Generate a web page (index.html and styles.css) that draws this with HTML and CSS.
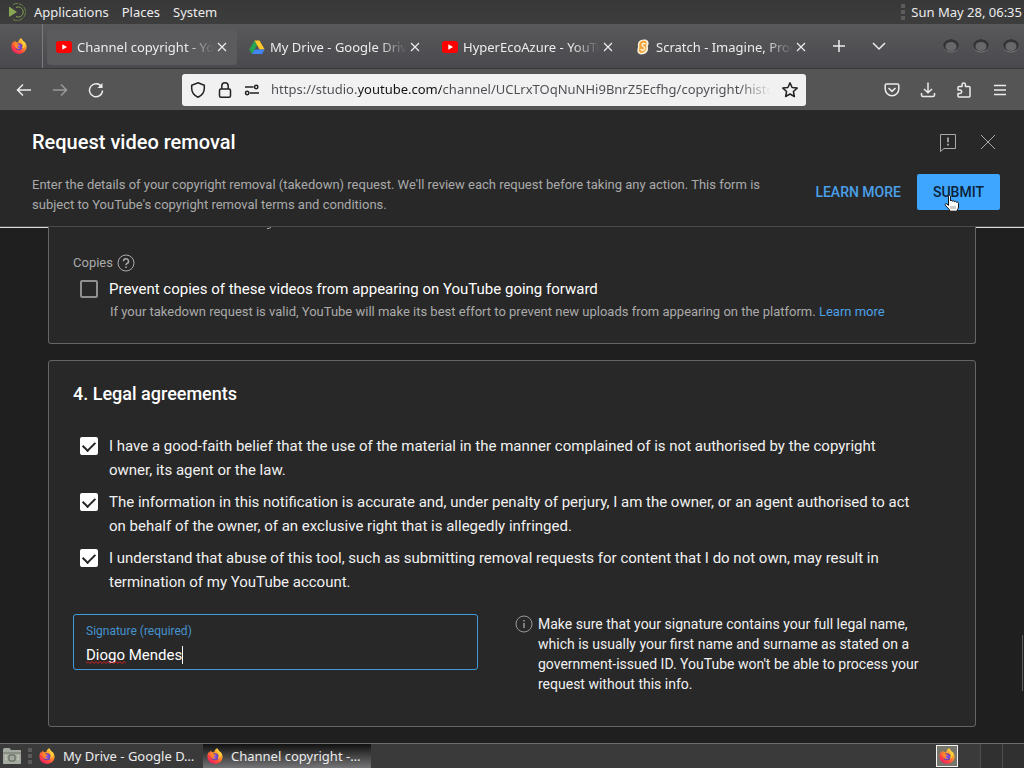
FILE: index.html
```html
<!DOCTYPE html>
<html lang="en">
<head>
<meta charset="utf-8">
<title>Channel copyright - YouTube Studio</title>
<link rel="stylesheet" href="styles.css">
</head>
<body>
<svg class="defs" aria-hidden="true">
  <defs>
    <linearGradient id="ff-body" x1="0.9" y1="0" x2="0.2" y2="1">
      <stop offset="0" stop-color="#ffe348"/><stop offset="0.4" stop-color="#ff9a28"/><stop offset="0.7" stop-color="#ff4a3c"/><stop offset="1" stop-color="#e8186c"/>
    </linearGradient>
    <radialGradient id="ff-globe"><stop offset="0" stop-color="#9a5af0"/><stop offset="1" stop-color="#5a3fb8"/></radialGradient>
    <linearGradient id="ring" x1="0" y1="0" x2="0" y2="1"><stop offset="0" stop-color="#1e1e20"/><stop offset="1" stop-color="#7c7c80"/></linearGradient>
    <symbol id="firefox" viewBox="0 0 16 16">
      <path fill="url(#ff-body)" d="M10 0.3c1 1 1.500 1.800 1.800 2.600C14.500 4 15.800 6.500 15.600 9c-.3 4-3.600 6.800-7.500 6.800C3.800 15.800.4 12.600.4 8.400c0-2 .7-3.600 1.800-5L2.400 5 4 2.500l.7 1.600c.9-.2 1.700 0 2.400.4C7.500 2.800 8.400 1.200 10 .3z"/>
      <circle cx="8" cy="8.700" r="3.500" fill="url(#ff-globe)"/>
      <path fill="#ff8a2a" d="M3.200 6.300c1.500-1 3-.8 4 .2l1.500.3c-.2 1-1.600 1-2 1.700-.2 1.400 1 2.100 2.500 1.500-.8 1.500-4.200 1.200-5-1.200-.3-1-.2-1.800-1-2.500z"/>
      <path fill="#ffd23c" d="M10 .3c-.5 2.500 1.800 3.500 2.100 6.200.2 2-.8 3.300-1.600 4 2.800-.5 4.200-3 3.600-5.300-.4-1-1.300-1.800-2.300-2.300C11.500 2 11 1.300 10 .3z"/>
    </symbol>
    <symbol id="youtube" viewBox="0 0 16 12"><rect width="16" height="12" rx="3" fill="#f00"/><path d="M6.300 3.300v5.400L11 6z" fill="#fff"/></symbol>
    <symbol id="close" viewBox="0 0 10 10"><path d="M1 1l8 8M9 1L1 9" fill="none" stroke="currentColor" stroke-width="1.200"/></symbol>
    <symbol id="winbtn" viewBox="0 0 18 16"><ellipse cx="9" cy="8" rx="8" ry="6.500" fill="url(#ring)"/><ellipse cx="9" cy="7.500" rx="7.500" ry="6" fill="#343436"/><ellipse cx="9" cy="8.500" rx="5.500" ry="4.500" fill="#68686b"/></symbol>
  </defs>
</svg>

<header class="panel">
  <svg class="mate" viewBox="0 0 20 20" fill="none"><path d="M1 4.500L9 10l-8 5z" fill="#87a752"/><path d="M5 2.500A8.500 8.500 0 1 1 5 17.500" stroke="#6d8449" stroke-dasharray="5 1"/><path d="M8 5.500a5 5 0 1 1 0 9" stroke="#87a752"/></svg>
  <nav class="panel-menu"><button>Applications</button><button>Places</button><button>System</button></nav>
  <span class="grip"></span>
  <time class="clock">Sun May 28, 06:35</time>
</header>

<div class="tabbar">
  <button class="pinned" aria-label="Firefox View"><svg class="fav"><use href="#firefox"/></svg></button>
  <div class="tabs">
    <div class="tab active"><svg class="fav"><use href="#youtube"/></svg><span class="tab-title">Channel copyright - YouTube</span><button class="tab-close" aria-label="Close tab"><svg><use href="#close"/></svg></button></div>
    <div class="tab"><svg class="fav" viewBox="0 0 16 16"><path fill="#25a552" d="M5.500 1.500L0.300 10.500 3 15 8 6.300z"/><path fill="#ffc727" d="M5.500 1.500h5L15.700 10.500h-5.200z"/><path fill="#4285f4" d="M5.600 10.500h10.100L13 15H3z"/></svg><span class="tab-title">My Drive - Google Drive</span><button class="tab-close" aria-label="Close tab"><svg><use href="#close"/></svg></button></div>
    <div class="tab"><svg class="fav"><use href="#youtube"/></svg><span class="tab-title">HyperEcoAzure - YouTube</span><button class="tab-close" aria-label="Close tab"><svg><use href="#close"/></svg></button></div>
    <div class="tab"><svg class="fav" viewBox="0 0 16 16"><path d="M5.500 1.200C8 0 12 0 13 2c1 2 .7 4-.3 5 1.300 3.500-.5 7.500-4.500 8.300-3 .5-5.800-.3-5.800-3.200 0-1.500.3-3 .6-4C2.600 5 3 2.500 5.500 1.200z" fill="#fff3dc"/><path d="M6.500 2.300c2-.8 4.500-.6 5 1 .3 1.300 0 2.500-.7 3.300 1.500 3-.1 6.500-3.200 7.200-2 .4-3.700-.3-3.700-2.200 0-1.200.3-2.200.5-3.200C3.800 5.500 4.500 3 6.500 2.300z" fill="#f2a63a"/><path d="M10.200 5.300c-.5-1.500-3.200-1-3 .7.200 1.600 2.800 1.500 2.400 3.600-.3 1.900-3.200 2.200-3.800.5" fill="none" stroke="#fff3dc" stroke-width="1.400"/></svg><span class="tab-title">Scratch - Imagine, Program</span><button class="tab-close" aria-label="Close tab"><svg><use href="#close"/></svg></button></div>
  </div>
  <button class="bar-btn" aria-label="New tab"><svg viewBox="0 0 16 16"><path d="M8 2v12M2 8h12"/></svg></button>
  <button class="bar-btn" aria-label="List all tabs"><svg viewBox="0 0 16 16"><path d="M2 5l6 6 6-6"/></svg></button>
  <div class="winbtns"><button aria-label="Minimise"><svg><use href="#winbtn"/></svg></button><button aria-label="Maximise"><svg><use href="#winbtn"/></svg></button><button aria-label="Close window"><svg><use href="#winbtn"/></svg></button></div>
</div>

<div class="toolbar">
  <div class="nav-group">
    <button aria-label="Back"><svg viewBox="0 0 16 16"><path d="M15 8H1.500M7 2.500L1.500 8 7 13.500"/></svg></button>
    <button class="dim" aria-label="Forward"><svg viewBox="0 0 16 16"><path d="M1 8h13.500M9 2.500L14.500 8 9 13.500"/></svg></button>
    <button aria-label="Reload"><svg viewBox="0 0 16 16"><path d="M13.600 5A6.500 6.500 0 1 0 14.500 8.500"/><path d="M14.500 1v5h-5z" fill="currentColor" stroke="none"/></svg></button>
  </div>
  <div class="urlbar">
    <svg viewBox="0 0 16 16"><path d="M8 .8l6.300 2.400v3.300c0 4-2.500 7-6.300 8.700-3.800-1.700-6.300-4.700-6.300-8.700V3.200z"/></svg>
    <svg viewBox="0 0 16 16"><rect x="2.500" y="7" width="11" height="8.200" rx="1.500"/><path d="M4.800 7V4a3.200 3.200 0 0 1 6.400 0v3"/></svg>
    <svg viewBox="0 0 16 16"><path d="M1 5h8.500M6 11h9"/><circle cx="12.200" cy="5" r="1.700"/><circle cx="3.200" cy="11" r="1.700"/></svg>
    <input class="url" type="text" aria-label="Address" spellcheck="false" value="https://studio.youtube.com/channel/UCLrxTOqNuNHi9BnrZ5Ecfhg/copyright/history">
    <button aria-label="Bookmark this page"><svg viewBox="0 0 16 16"><path stroke-linejoin="round" d="M8 .9l2.100 4.600 5.100.6-3.800 3.400 1 5L8 12l-4.400 2.500 1-5L.8 6.100l5.100-.6z"/></svg></button>
  </div>
  <div class="tools">
    <button aria-label="Save to Pocket"><svg viewBox="0 0 16 16"><path d="M2.500 2h11c.8 0 1.300.5 1.300 1.300V7A6.800 6.800 0 0 1 1.200 7V3.300C1.200 2.500 1.700 2 2.500 2z"/><path d="M4.500 6L8 9.300 11.500 6" stroke-width="1.600"/></svg></button>
    <button aria-label="Downloads"><svg viewBox="0 0 16 16"><path d="M8 .5v10M4 7l4 3.800L12 7M1.500 11v2c0 1 .5 1.500 1.500 1.500h10c1 0 1.500-.5 1.500-1.500v-2"/></svg></button>
    <button aria-label="Extensions"><svg viewBox="0 0 16 16"><path stroke-linejoin="round" d="M6 4.500V2.700a1.700 1.700 0 0 1 3.400 0v1.800H13c.7 0 1 .4 1 1V14c0 .7-.4 1-1 1H3c-.7 0-1-.3-1-1v-2.500h2a1.700 1.700 0 0 0 0-3.400H2V5.500c0-.6.3-1 1-1z"/></svg></button>
    <button aria-label="Menu"><svg viewBox="0 0 16 16"><path d="M2 3.500h12M2 8h12M2 12.500h12"/></svg></button>
  </div>
</div>

<main class="dialog">
  <section class="dialog-head">
    <div class="row">
      <h1>Request video removal</h1>
      <div class="head-icons">
        <button aria-label="Send feedback"><svg viewBox="0 0 20 20"><path d="M2.500 2.500h15v14H6l-3.500 3z"/><path d="M10 5.500v4.800M10 11.800v1.800" stroke-width="1.800"/></svg></button>
        <button aria-label="Close"><svg viewBox="0 0 20 20"><path d="M3 3l14 14M17 3L3 17"/></svg></button>
      </div>
    </div>
    <div class="row">
      <p class="intro">Enter the details of your copyright removal (takedown) request. We'll review each request before taking any action. This form is subject to YouTube's copyright removal terms and conditions.</p>
      <div class="actions">
        <a class="learn" href="#learn">LEARN MORE</a>
        <button class="submit" type="submit" form="removal">SUBMIT
          <svg class="pointer" viewBox="0 0 16 17"><path d="M4.500 1.500c0-1.300 2-1.300 2 0V6c.3-.8 1.900-.7 2 .3.400-.8 2-.6 2.100.5.500-.8 2-.5 2.100.6.600-.5 1.800-.1 1.800 1V12c0 1-.7 2-1.200 2.800v1.400H5.500v-1.400L1.300 10.200C.5 9 2 8.200 2.900 9l1.600 1.400z" fill="#fff" stroke="#111"/><path d="M7 11v3M9 11v3M11 11v3" stroke="#999"/></svg>
        </button>
      </div>
    </div>
  </section>

  <form class="content" id="removal">
    <section class="card copies">
      <svg class="tail" viewBox="0 0 5 2"><path d="M0 1.500h2L4 0" stroke="#aaa" fill="none"/></svg>
      <div class="copies-title">Copies <button type="button" aria-label="Help"><svg viewBox="0 0 18 18"><circle cx="9" cy="9" r="8"/><path stroke-width="1.500" d="M6.500 7.200a2.500 2.500 0 1 1 3.700 2.200C9.300 9.900 9 10.200 9 11.200M9 12.400v1.500"/></svg></button></div>
      <div class="check"><input type="checkbox" id="prevent"><label for="prevent">Prevent copies of these videos from appearing on YouTube going forward</label></div>
      <p class="hint">If your takedown request is valid, YouTube will make its best effort to prevent new uploads from appearing on the platform. <a href="#copies">Learn more</a></p>
    </section>

    <section class="card legal">
      <h2>4. Legal agreements</h2>
      <div class="checks">
        <div class="check"><input type="checkbox" id="faith" checked><label for="faith">I have a good-faith belief that the use of the material in the manner complained of is not authorised by the copyright owner, its agent or the law.</label></div>
        <div class="check"><input type="checkbox" id="accurate" checked><label for="accurate">The information in this notification is accurate and, under penalty of perjury, I am the owner, or an agent authorised to act on behalf of the owner, of an exclusive right that is allegedly infringed.</label></div>
        <div class="check"><input type="checkbox" id="abuse" checked><label for="abuse">I understand that abuse of this tool, such as submitting removal requests for content that I do not own, may result in termination of my YouTube account.</label></div>
      </div>
      <div class="sign-row">
        <div class="field">
          <label for="signature">Signature (required)</label>
          <input type="text" id="signature" value="Diogo Mendes" spellcheck="false">
          <svg class="squiggle" viewBox="0 0 40 3"><path d="M0 2.500l2-2 2 2 2-2 2 2 2-2 2 2 2-2 2 2 2-2 2 2 2-2 2 2 2-2 2 2 2-2 2 2 2-2 2 2 2-2 2 2"/></svg>
          <span class="caret"></span>
        </div>
        <div class="info">
          <svg viewBox="0 0 18 18"><circle cx="9" cy="9" r="8"/><path d="M9 8v5M9 5v1.500" stroke-width="1.500"/></svg>
          <p>Make sure that your signature contains your full legal name, which is usually your first name and surname as stated on a government-issued ID. YouTube won't be able to process your request without this info.</p>
        </div>
      </div>
    </section>
    <span class="scroll-thumb"></span>
  </form>
</main>

<footer class="taskbar">
  <button class="desk" aria-label="Show desktop"><svg viewBox="0 0 20 18"><path d="M1 3c0-1 .5-2 1.500-2h5L9 3h9c.7 0 1 .4 1 1v12c0 .7-.4 1-1 1H2c-.7 0-1-.3-1-1z" fill="#a5aaa0"/><path d="M1 6h18" stroke="#6f756b"/><rect x="7" y="8" width="6" height="6" rx="1" fill="none" stroke="#555b52"/><path d="M3 9h2M3 12h2M15 9h2M15 12h2" stroke="#d8dbd3"/></svg></button>
  <span class="grip"></span>
  <button class="task"><svg class="fav"><use href="#firefox"/></svg><span>My Drive - Google D…</span></button>
  <button class="task current"><svg class="fav"><use href="#firefox"/></svg><span>Channel copyright -…</span></button>
  <button class="tray" aria-label="Workspace 1"><svg class="fav"><use href="#firefox"/></svg></button>
  <span class="workspace"></span><span class="workspace"></span>
</footer>
</body>
</html>
```

FILE: styles.css
```css
* { box-sizing: border-box; }
body {
  margin: 0;
  height: 100vh;
  display: flex;
  flex-direction: column;
  overflow: hidden;
  background: #1f1f1f;
  color: #f1f1f1;
  font: 15px/24px Roboto, sans-serif;
}
h1, h2, p { margin: 0; }
button {
  padding: 0;
  border: 0;
  background: none;
  color: inherit;
  font: inherit;
  display: flex;
  align-items: center;
  justify-content: center;
}
svg { flex: none; display: block; }
a { color: #4da0e6; text-decoration: none; }
.defs { position: absolute; width: 0; height: 0; }
.fav { width: 16px; height: 16px; }

.panel, .tabbar, .toolbar, .taskbar {
  flex: none;
  display: flex;
  align-items: center;
  font: 13px/20px "Noto Sans", sans-serif;
  color: #ececec;
}

/* Desktop panel */
.panel { height: 24px; padding: 0 2px 0 8px; background: linear-gradient(#383839, #3d3d3e); }
.mate { width: 20px; height: 20px; margin-right: 6px; }
.panel-menu { display: flex; gap: 13px; margin-right: auto; }
.grip { width: 4px; height: 16px; margin-right: 6px; background: repeating-linear-gradient(#5c5c5c 0 4px, transparent 4px 6px); }

/* Tabs */
.tabbar { height: 45px; background: linear-gradient(#59595c, #4a4a4e); border-bottom: 1px solid #38383a; }
.pinned { width: 43px; height: 100%; padding-right: 4px; border-right: 1px solid #7b7b7e; }
.tabs { display: flex; gap: 3px; margin: 2px 7px 0 4px; }
.tab { display: flex; align-items: center; width: 190px; height: 36px; padding: 0 7px 0 9px; border-radius: 4px; }
.tab.active { background: #5b5b5e; }
.tab-title {
  flex: 1;
  min-width: 0;
  margin-left: 5px;
  overflow: hidden;
  white-space: nowrap;
  mask-image: linear-gradient(90deg, #000 calc(100% - 28px), transparent);
}
.tab-close { width: 16px; height: 20px; }
.tab-close svg { width: 10px; height: 10px; }
.bar-btn { width: 32px; height: 32px; margin-right: 8px; }
.bar-btn svg, .toolbar svg { width: 16px; height: 16px; fill: none; stroke: currentColor; stroke-width: 1.5; }
.winbtns { display: flex; gap: 12px; margin-left: auto; margin-right: 4px; }
.winbtns svg { width: 18px; height: 16px; }

/* Navigation */
.toolbar { height: 41px; background: #555556; padding: 0 16px; }
.nav-group, .tools { display: flex; gap: 20px; }
.dim { opacity: .45; }
.urlbar {
  flex: 1;
  min-width: 0;
  display: flex;
  align-items: center;
  gap: 11px;
  height: 32px;
  margin: 0 78px;
  padding: 0 8px;
  border-radius: 3px;
  background: #f1f1f2;
  color: #222;
}
.url {
  flex: 1;
  min-width: 0;
  height: 24px;
  padding: 0 0 2px;
  border: 0;
  outline: 0;
  color: #3f3f44;
  font: 13px/20px "Noto Sans", sans-serif;
  background: linear-gradient(90deg, #4c4c51 88px, #111 88px 170px, #4c4c51 170px);
  background-clip: text;
  -webkit-text-fill-color: transparent;
  mask-image: linear-gradient(90deg, #000 calc(100% - 32px), transparent);
}

/* Dialog */
.dialog { flex: 1; min-height: 0; display: flex; flex-direction: column; }
.dialog-head { flex: none; padding: 16px 24px 11px 32px; background: #282828; border-bottom: 1px solid #4a4a4a; }
.row { display: flex; align-items: center; justify-content: space-between; }
h1 { font-size: 20px; line-height: 32px; font-weight: 500; color: #fff; }
.head-icons { display: flex; gap: 20px; padding-right: 2px; }
.head-icons svg { width: 20px; height: 20px; fill: none; stroke: #aaa; }
.intro { max-width: 740px; padding-top: 17px; color: #aaa; font-size: 13px; line-height: 20px; }
.actions { display: flex; align-items: center; gap: 16px; padding-top: 11px; font-size: 14px; font-weight: 500; }
.learn { color: #4aa0ea; }
.submit { position: relative; height: 36px; padding: 0 16px; border-radius: 2px; background: #3ea6ff; color: #0c2238; }
.pointer { position: absolute; left: 27px; top: 21px; width: 16px; height: 17px; fill: none; }

.content { position: relative; flex: 1; min-height: 0; padding: 0 48px; overflow: hidden; background: linear-gradient(#dedede, #dedede) 0 0 / 100% 1px no-repeat; }
.card { position: relative; padding: 20px 24px; border: 1px solid #656565; border-radius: 3px; background: #282828; }
.copies { margin-bottom: 16px; padding: 24px 24px 21px; border-top: 0; border-radius: 0 0 3px 3px; }
.tail { position: absolute; left: 218px; top: 0; width: 5px; height: 2px; }
.copies-title { display: flex; align-items: center; gap: 4px; color: #aaa; font-size: 13px; }
.copies-title svg { width: 18px; height: 18px; fill: none; stroke: #aaa; }
.check { display: flex; gap: 11px; padding: 0 36px 0 7px; }
.check input {
  appearance: none;
  flex: none;
  display: flex;
  justify-content: center;
  width: 18px;
  height: 18px;
  margin: 3px 0;
  border: 2px solid #909090;
  border-radius: 2px;
}
.check input:checked { background: #fff; border-color: #fff; }
.check input:checked::before { content: ""; width: 6px; height: 10px; border: solid #222; border-width: 0 2px 2px 0; transform: rotate(45deg); }
.copies .check { margin-top: 2px; color: #fff; }
.hint { padding: 1px 0 0 37px; color: #aaa; font-size: 13px; line-height: 20px; }
h2 { margin-bottom: 27px; font-size: 18px; line-height: 26px; font-weight: 500; color: #fff; }
.legal { padding-bottom: 32px; }
.checks { display: grid; gap: 8px; }
.sign-row { display: grid; grid-template-columns: 405fr 436fr; gap: 37px; margin-top: 20px; align-items: start; }
.field { position: relative; height: 56px; padding: 6px 12px; border: 1px solid #3f9bdc; border-radius: 3px; }
.field label { display: block; color: #4593cf; font-size: 12px; line-height: 20px; }
.field input { display: block; width: 100%; height: 28px; padding: 0; border: 0; outline: 0; background: none; color: #fff; font: 15px/28px Roboto, sans-serif; }
.squiggle { position: absolute; left: 12px; top: 46px; width: 40px; height: 3px; fill: none; stroke: #e02020; }
.caret { position: absolute; left: 108px; top: 31px; width: 1px; height: 18px; background: #fff; }
.info { display: flex; gap: 5px; padding-right: 24px; font-size: 14px; line-height: 20px; }
.info svg { width: 18px; height: 18px; margin-top: 1px; fill: none; stroke: #999; }
.scroll-thumb { position: absolute; right: 1px; top: 408px; width: 1px; height: 56px; background: #5c5c5c; }

/* Task list */
.taskbar { height: 25px; padding-left: 2px; border-top: 1px solid #6c6c6c; background: #3a3a3b; }
.desk { margin-right: 6px; }
.desk svg { width: 20px; height: 18px; }
.taskbar .grip { margin-right: 3px; }
.task { justify-content: flex-start; width: 168px; height: 100%; padding: 0 4px; gap: 8px; }
.task span { white-space: nowrap; }
.task.current { background: linear-gradient(#111, #747476); }
.tray { width: 22px; height: 22px; margin: 0 22px 0 auto; border: 1px solid #f3f3f3; background: #77766c; }
.workspace { width: 22px; height: 100%; border-left: 1px solid #4d4d50; background: #303031; }
```
